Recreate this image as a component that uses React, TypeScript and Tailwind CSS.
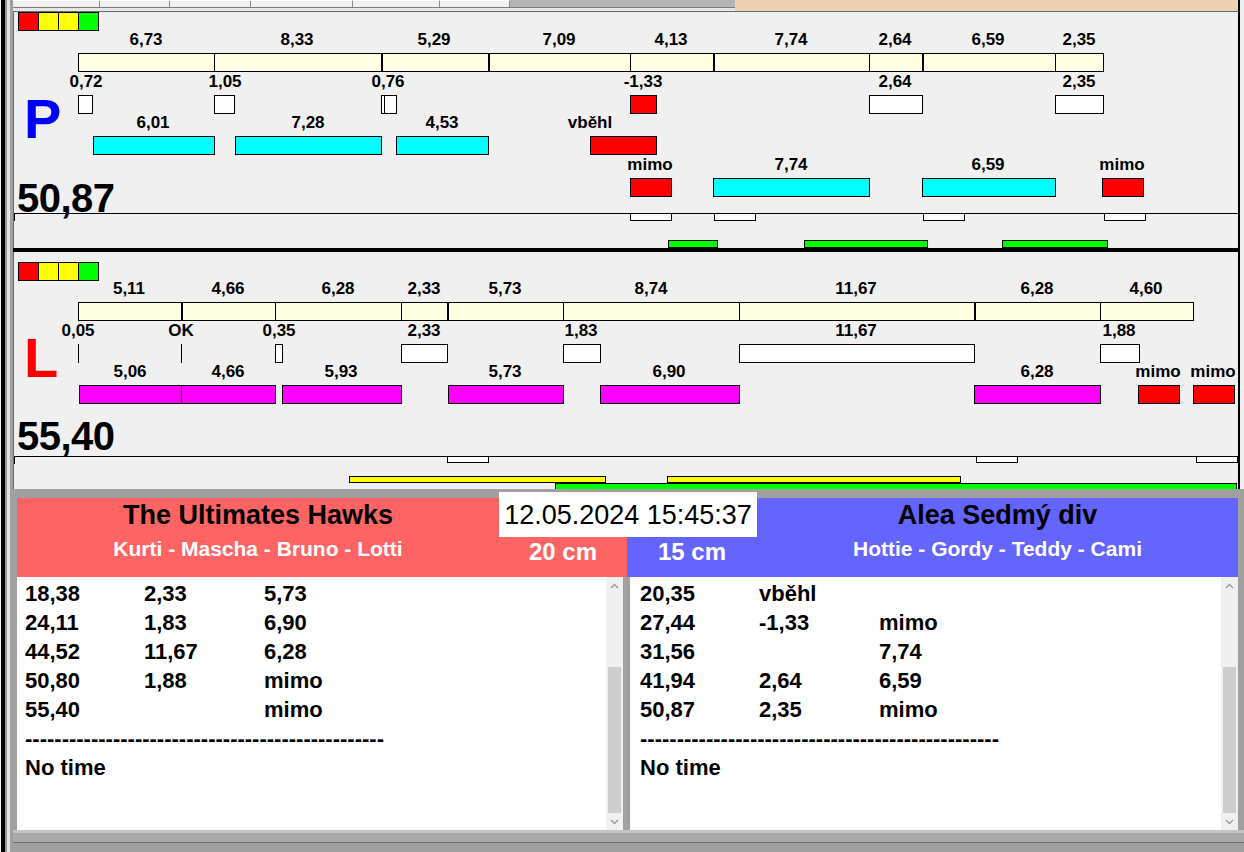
import React from 'react'

// page coordinates of the chart panels' inner top-left corner
const X0 = 14

type Bar = { x1: number; x2: number; bg: string }
type Lbl = { cx: number; t: string }
type Row = { y: number; h: number; cy?: number; bars: Bar[]; labels?: Lbl[] }

const Y = '#ffffe1'
const W = '#ffffff'
const R = '#ff0000'
const C = '#00ffff'
const M = '#ff00ff'
const G = '#00ff00'
const YL = '#ffff00'

const P_ROWS: Row[] = [
  {
    y: 53, h: 19, cy: 40,
    bars: [
      { x1: 78, x2: 214, bg: Y }, { x1: 214, x2: 381, bg: Y }, { x1: 382, x2: 488, bg: Y },
      { x1: 489, x2: 630, bg: Y }, { x1: 630, x2: 713, bg: Y }, { x1: 714, x2: 869, bg: Y },
      { x1: 869, x2: 922, bg: Y }, { x1: 923, x2: 1055, bg: Y }, { x1: 1055, x2: 1103, bg: Y },
    ],
    labels: [
      { cx: 146, t: '6,73' }, { cx: 297, t: '8,33' }, { cx: 434, t: '5,29' }, { cx: 559, t: '7,09' },
      { cx: 671, t: '4,13' }, { cx: 791, t: '7,74' }, { cx: 895, t: '2,64' }, { cx: 988, t: '6,59' },
      { cx: 1079, t: '2,35' },
    ],
  },
  {
    y: 95, h: 19, cy: 82,
    bars: [
      { x1: 78, x2: 92, bg: W }, { x1: 214, x2: 234, bg: W }, { x1: 381, x2: 384, bg: W },
      { x1: 384, x2: 396, bg: W }, { x1: 630, x2: 656, bg: R }, { x1: 869, x2: 922, bg: W },
      { x1: 1055, x2: 1103, bg: W },
    ],
    labels: [
      { cx: 86, t: '0,72' }, { cx: 225, t: '1,05' }, { cx: 388, t: '0,76' }, { cx: 643, t: '-1,33' },
      { cx: 895, t: '2,64' }, { cx: 1079, t: '2,35' },
    ],
  },
  {
    y: 136, h: 19, cy: 123,
    bars: [
      { x1: 93, x2: 214, bg: C }, { x1: 235, x2: 381, bg: C }, { x1: 396, x2: 488, bg: C },
      { x1: 590, x2: 656, bg: R },
    ],
    labels: [{ cx: 153, t: '6,01' }, { cx: 308, t: '7,28' }, { cx: 442, t: '4,53' }, { cx: 590, t: 'vběhl' }],
  },
  {
    y: 178, h: 19, cy: 165,
    bars: [
      { x1: 630, x2: 671, bg: R }, { x1: 713, x2: 869, bg: C }, { x1: 922, x2: 1055, bg: C },
      { x1: 1102, x2: 1143, bg: R },
    ],
    labels: [{ cx: 650, t: 'mimo' }, { cx: 791, t: '7,74' }, { cx: 988, t: '6,59' }, { cx: 1122, t: 'mimo' }],
  },
  {
    y: 213, h: 8,
    bars: [
      { x1: 630, x2: 671, bg: W }, { x1: 714, x2: 755, bg: W }, { x1: 923, x2: 964, bg: W },
      { x1: 1104, x2: 1145, bg: W },
    ],
  },
  {
    y: 240, h: 8,
    bars: [{ x1: 668, x2: 717, bg: G }, { x1: 804, x2: 927, bg: G }, { x1: 1002, x2: 1107, bg: G }],
  },
]

const L_ROWS: Row[] = [
  {
    y: 302, h: 19, cy: 289,
    bars: [
      { x1: 78, x2: 181, bg: Y }, { x1: 182, x2: 275, bg: Y }, { x1: 275, x2: 401, bg: Y },
      { x1: 401, x2: 447, bg: Y }, { x1: 448, x2: 563, bg: Y }, { x1: 563, x2: 739, bg: Y },
      { x1: 739, x2: 974, bg: Y }, { x1: 975, x2: 1100, bg: Y }, { x1: 1100, x2: 1193, bg: Y },
    ],
    labels: [
      { cx: 129, t: '5,11' }, { cx: 228, t: '4,66' }, { cx: 338, t: '6,28' }, { cx: 424, t: '2,33' },
      { cx: 505, t: '5,73' }, { cx: 651, t: '8,74' }, { cx: 856, t: '11,67' }, { cx: 1037, t: '6,28' },
      { cx: 1146, t: '4,60' },
    ],
  },
  {
    y: 344, h: 19, cy: 331,
    bars: [
      { x1: 275, x2: 282, bg: W }, { x1: 401, x2: 447, bg: W }, { x1: 563, x2: 600, bg: W },
      { x1: 739, x2: 974, bg: W }, { x1: 1100, x2: 1139, bg: W },
    ],
    labels: [
      { cx: 78, t: '0,05' }, { cx: 181, t: 'OK' }, { cx: 279, t: '0,35' }, { cx: 424, t: '2,33' },
      { cx: 581, t: '1,83' }, { cx: 856, t: '11,67' }, { cx: 1119, t: '1,88' },
    ],
  },
  {
    y: 385, h: 19, cy: 372,
    bars: [
      { x1: 79, x2: 181, bg: M }, { x1: 181, x2: 275, bg: M }, { x1: 282, x2: 401, bg: M },
      { x1: 448, x2: 563, bg: M }, { x1: 600, x2: 739, bg: M }, { x1: 974, x2: 1100, bg: M },
      { x1: 1138, x2: 1179, bg: R }, { x1: 1193, x2: 1234, bg: R },
    ],
    labels: [
      { cx: 130, t: '5,06' }, { cx: 228, t: '4,66' }, { cx: 341, t: '5,93' }, { cx: 505, t: '5,73' },
      { cx: 669, t: '6,90' }, { cx: 1037, t: '6,28' }, { cx: 1158, t: 'mimo' }, { cx: 1213, t: 'mimo' },
    ],
  },
  {
    y: 456, h: 7,
    bars: [{ x1: 447, x2: 488, bg: W }, { x1: 976, x2: 1017, bg: W }, { x1: 1196, x2: 1237, bg: W }],
  },
  { y: 476, h: 7, bars: [{ x1: 349, x2: 605, bg: YL }, { x1: 667, x2: 960, bg: YL }] },
  { y: 483, h: 7, bars: [{ x1: 555, x2: 1236, bg: G }] },
]

function Lights({ top }: { top: number }) {
  return (
    <div className="absolute left-[4px] flex" style={{ top }}>
      <div className="w-[21px] h-[19px] bg-[#ff0000] border border-black" />
      <div className="w-[21px] h-[19px] bg-[#ffff00] border border-black -ml-px" />
      <div className="w-[21px] h-[19px] bg-[#ffff00] border border-black -ml-px" />
      <div className="w-[21px] h-[19px] bg-[#00ff00] border border-black -ml-px" />
    </div>
  )
}

function Rows({ rows, y0 }: { rows: Row[]; y0: number }) {
  return (
    <>
      {rows.map((r, i) => (
        <React.Fragment key={i}>
          {r.bars.map((b, j) => (
            <div
              key={j}
              className="absolute border border-black"
              style={{ left: b.x1 - X0, width: b.x2 - b.x1 + 1, top: r.y - y0, height: r.h, background: b.bg }}
            />
          ))}
          {r.labels?.map((l, j) => (
            <div
              key={'l' + j}
              className="absolute -translate-x-1/2 whitespace-nowrap text-[17px] leading-[20px] font-bold text-black"
              style={{ left: l.cx - X0, top: (r.cy ?? 0) - y0 - 10 }}
            >
              {l.t}
            </div>
          ))}
        </React.Fragment>
      ))}
    </>
  )
}

function ChartPanel({
  y0, rows, letter, letterClass, total, lineY, ticks, topBorder,
}: {
  y0: number
  rows: Row[]
  letter: string
  letterClass: string
  total: string
  lineY: number
  ticks?: number[]
  topBorder?: boolean
}) {
  return (
    <div
      className={`relative h-[237px] mr-[4px] bg-[#f0f0f0] border-l border-l-[#696969] border-r-2 border-r-black overflow-hidden ${
        topBorder ? 'border-t border-t-[#696969]' : ''
      }`}
    >
      <Lights top={topBorder ? 0 : 10} />
      <div className={`absolute left-[10px] text-[56px] leading-[56px] font-bold ${letterClass}`} style={{ top: y0 === 12 ? 79 : 78 }}>
        {letter}
      </div>
      <div className="absolute left-[3px] text-[40px] leading-[40px] font-bold tracking-[-0.5px] text-black" style={{ top: y0 === 12 ? 166 : 164 }}>
        {total}
      </div>
      {/* timeline frame */}
      <div className="absolute left-0 right-0 bottom-0 border-t border-black" style={{ top: lineY - y0 }}>
        <div className="absolute left-0 top-0 w-px h-[7px] bg-black" />
      </div>
      {ticks?.map((x) => (
        <div key={x} className="absolute w-px h-[19px] bg-black" style={{ left: x - X0, top: 344 - y0 }} />
      ))}
      <Rows rows={rows} y0={y0} />
    </div>
  )
}

function Chevron({ up }: { up?: boolean }) {
  return (
    <svg width="9" height="6" viewBox="0 0 9 6">
      <polyline
        points={up ? '1,5 4.5,1.5 8,5' : '1,1 4.5,4.5 8,1'}
        fill="none"
        stroke="#9a9a9a"
        strokeWidth="1.4"
      />
    </svg>
  )
}

function ScrollBar() {
  return (
    <div className="w-[17px] h-full bg-[#f0f0f0] flex flex-col">
      <div className="h-[17px] flex items-center justify-center">
        <Chevron up />
      </div>
      <div className="flex-1 px-[2px] pt-[73px]">
        <div className="h-[146px] bg-[#cdcdcd]" />
      </div>
      <div className="h-[17px] flex items-center justify-center">
        <Chevron />
      </div>
    </div>
  )
}

function ResultList({ rows, padLeft }: { rows: string[][]; padLeft: string }) {
  return (
    <div className={`flex-1 bg-white pt-[2px] ${padLeft} text-[22px] leading-[29px] font-bold text-black`}>
      {rows.map((r, i) => (
        <div key={i} className="flex whitespace-nowrap">
          <span className="w-[119px]">{r[0]}</span>
          <span className="w-[120px]">{r[1]}</span>
          <span>{r[2]}</span>
        </div>
      ))}
      <div className="whitespace-nowrap">{'-'.repeat(49)}</div>
      <div>No time</div>
    </div>
  )
}

const LEFT_ROWS = [
  ['18,38', '2,33', '5,73'],
  ['24,11', '1,83', '6,90'],
  ['44,52', '11,67', '6,28'],
  ['50,80', '1,88', 'mimo'],
  ['55,40', '', 'mimo'],
]

const RIGHT_ROWS = [
  ['20,35', 'vběhl', ''],
  ['27,44', '-1,33', 'mimo'],
  ['31,56', '', '7,74'],
  ['41,94', '2,64', '6,59'],
  ['50,87', '2,35', 'mimo'],
]

const TABS = [87, 70, 81, 102, 87, 70]

export default function App() {
  return (
    <div className="w-[1244px] h-[852px] flex bg-[#f0f0f0] overflow-hidden font-['Liberation_Sans',Arial,sans-serif] select-none">
      {/* left window edge */}
      <div className="flex h-full shrink-0">
        <div className="w-px bg-[#f0f0f0]" />
        <div className="w-[4px] bg-black" />
        <div className="w-[2px] bg-[#9a9a9a]" />
        <div className="w-[3px] bg-[#e3e3e3]" />
        <div className="w-[3px] bg-[#a0a0a0]" />
      </div>

      <div className="flex-1 flex flex-col">
        {/* top strip */}
        <div className="h-[11px] flex shrink-0">
          <div className="w-[722px] flex flex-col">
            <div className="h-[8px] flex bg-[#b4b4b4] border-b border-[#7a7a7a]">
              {TABS.map((w, i) => (
                <div key={i} className="h-full bg-[#f0f0f0] border-t border-t-white border-r border-r-[#8a8a8a]" style={{ width: w }} />
              ))}
            </div>
            <div className="flex-1 bg-[#e6e6e6]" />
          </div>
          <div className="flex-1 mr-[4px] bg-[#eed0b3] border-r-2 border-r-black" />
        </div>

        {/* P chart */}
        <ChartPanel
          y0={12}
          rows={P_ROWS}
          letter="P"
          letterClass="text-[#0000ff]"
          total="50,87"
          lineY={213}
          topBorder
        />
        <div className="h-[4px] bg-black mr-[4px] shrink-0" />

        {/* L chart */}
        <ChartPanel
          y0={252}
          rows={L_ROWS}
          letter="L"
          letterClass="text-[#ff0000]"
          total="55,40"
          lineY={456}
          ticks={[78, 181]}
        />

        {/* bottom: teams */}
        <div className="relative flex flex-col bg-[#a0a0a0] shrink-0">
          <div className="h-[9px]" />
          <div className="flex h-[332px] pl-[4px] pr-[6px]">
            {/* left team */}
            <div className="w-[610px] flex flex-col">
              <div className="h-[79px] flex bg-[#ff6464]">
                <div className="w-[482px] flex flex-col items-center pt-px">
                  <div className="text-[27px] leading-[32px] font-bold text-black whitespace-nowrap">The Ultimates Hawks</div>
                  <div className="mt-[6px] text-[21px] leading-[24px] font-bold text-white whitespace-nowrap">
                    Kurti - Mascha - Bruno - Lotti
                  </div>
                </div>
                <div className="flex-1 flex justify-center pt-[40px]">
                  <div className="text-[24px] leading-[28px] font-bold text-white whitespace-nowrap">20 cm</div>
                </div>
              </div>
              <div className="flex-1 flex pr-[4px]">
                <ResultList rows={LEFT_ROWS} padLeft="pl-[8px]" />
                <ScrollBar />
              </div>
            </div>
            {/* right team */}
            <div className="w-[611px] flex flex-col">
              <div className="h-[79px] flex bg-[#6464ff]">
                <div className="w-[130px] flex justify-center pt-[40px]">
                  <div className="text-[24px] leading-[28px] font-bold text-white whitespace-nowrap">15 cm</div>
                </div>
                <div className="flex-1 flex flex-col items-center pt-px">
                  <div className="text-[27px] leading-[32px] font-bold text-black whitespace-nowrap">Alea Sedmý div</div>
                  <div className="mt-[6px] text-[21px] leading-[24px] font-bold text-white whitespace-nowrap">
                    Hottie - Gordy - Teddy - Cami
                  </div>
                </div>
              </div>
              <div className="flex-1 flex pl-[3px]">
                <ResultList rows={RIGHT_ROWS} padLeft="pl-[10px]" />
                <ScrollBar />
              </div>
            </div>
          </div>

          {/* date / time box */}
          <div className="absolute left-[486px] top-[3px] w-[258px] h-[45px] bg-white flex items-center justify-center text-[27px] leading-[30px] text-black whitespace-nowrap">
            12.05.2024 15:45:37
          </div>
        </div>

        {/* footer */}
        <div className="flex-1 flex flex-col">
          <div className="h-[3px] bg-[#c4c4c4]" />
          <div className="h-[9px] bg-[#a9a9a9]" />
          <div className="h-px bg-[#6f6f6f]" />
          <div className="flex-1 bg-[#a0a0a0]" />
        </div>
      </div>
    </div>
  )
}
